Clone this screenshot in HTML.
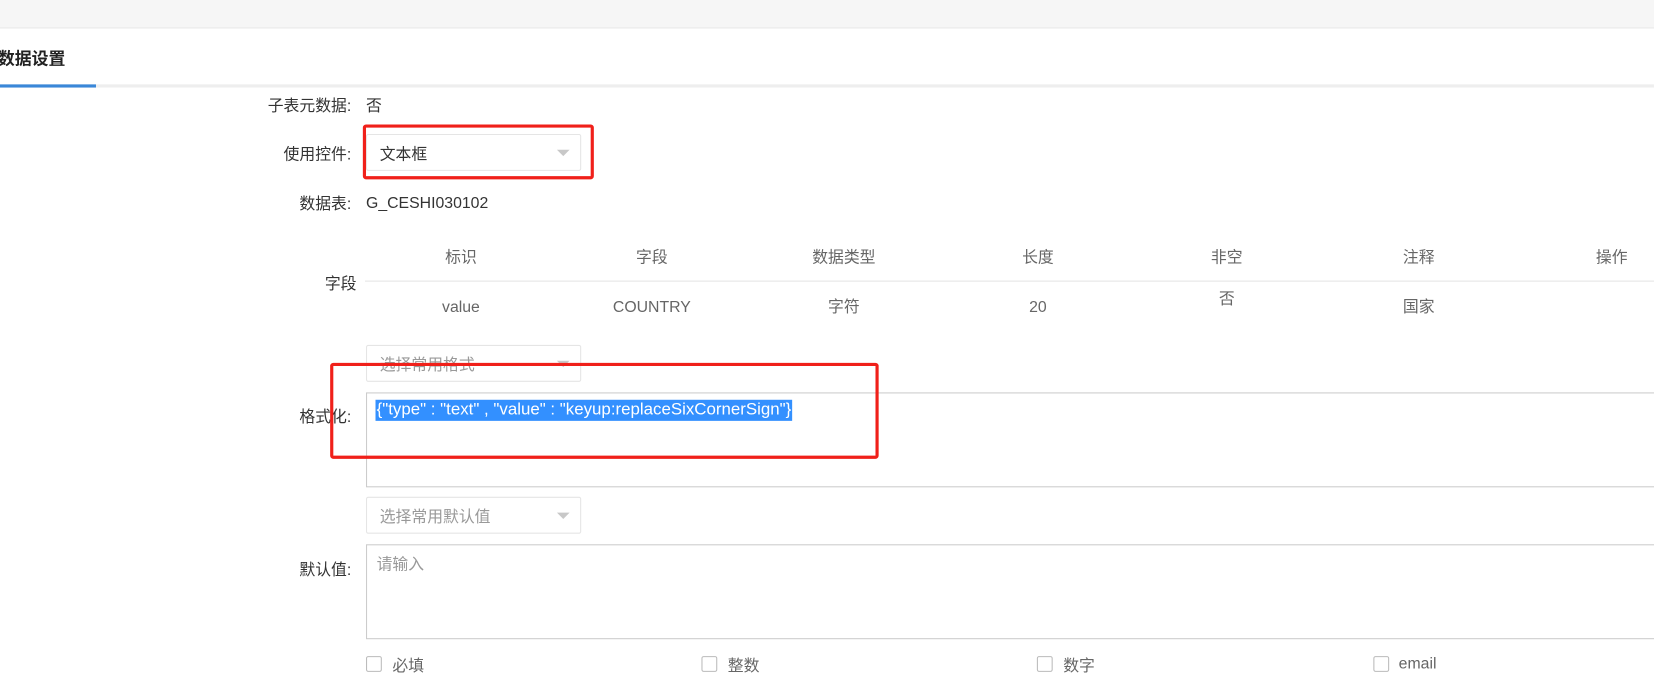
<!DOCTYPE html>
<html><head><meta charset="utf-8"><style>
body{margin:0;width:1654px;height:667px;overflow:hidden;background:#fff;font-family:"Liberation Sans","Noto Sans CJK SC",sans-serif;color:#333;position:relative}
#w{position:absolute;left:0;top:0;width:1568px;height:633px;transform:scale(1.0548);transform-origin:0 0;font-size:15px}
.a{position:absolute;white-space:nowrap}
.lbl{position:absolute;right:calc(1568px - 333px);white-space:nowrap;color:#333}
.sel{position:absolute;left:347px;width:204px;height:35px;border:1px solid #e5e5e5;box-sizing:border-box;border-radius:2px}
.sel .t{position:absolute;left:12px;top:7px;color:#999}
.sel .c{position:absolute;right:10px;top:14px;border-left:6px solid transparent;border-right:6px solid transparent;border-top:6px solid #c8c8c8}
.ta{position:absolute;left:347px;width:1400px;border:1px solid #ccc;box-sizing:border-box}
.th{position:absolute;top:233px;color:#666;transform:translateX(-50%)}
.td{position:absolute;top:281px;color:#666;transform:translateX(-50%)}
.cb{position:absolute;top:622px;width:13px;height:13px;border:1px solid #bbb;border-radius:2px}
.red{position:absolute;border:3px solid #f0201a;border-radius:3px;box-sizing:border-box}
</style></head><body><div id="w">
<div class="a" style="left:0;top:0;width:1568px;height:26px;background:#f6f6f6;border-bottom:1px solid #e8e8e8"></div>
<div class="a" style="left:-2px;top:42px;font-size:16px;font-weight:bold;color:#222">数据设置</div>
<div class="a" style="left:0;top:80px;width:1568px;height:3px;background:#eee"></div>
<div class="a" style="left:0;top:80px;width:91px;height:3px;background:#3a87d8"></div>

<div class="lbl" style="top:89px">子表元数据:</div><div class="a" style="left:347px;top:89px">否</div>
<div class="lbl" style="top:135px">使用控件:</div>
<div class="sel" style="top:127px"><span class="t" style="color:#333">文本框</span><span class="c"></span></div>
<div class="red" style="left:344px;top:118px;width:219px;height:52px"></div>
<div class="lbl" style="top:182px">数据表:</div><div class="a" style="left:347px;top:184px">G_CESHI030102</div>

<div class="lbl" style="top:258px;right:calc(1568px - 338px)">字段</div>
<div class="a" style="left:346px;top:266px;width:1300px;height:1px;background:#e5e5e5"></div>
<div class="th" style="left:437px">标识</div><div class="th" style="left:618px">字段</div><div class="th" style="left:800px">数据类型</div><div class="th" style="left:984px">长度</div><div class="th" style="left:1163px">非空</div><div class="th" style="left:1345px">注释</div><div class="th" style="left:1528px">操作</div>
<div class="td" style="left:437px;top:283px">value</div><div class="td" style="left:618px;top:283px">COUNTRY</div><div class="td" style="left:800px;top:280px">字符</div><div class="td" style="left:984px;top:283px">20</div><div class="td" style="left:1163px;top:272px">否</div><div class="td" style="left:1345px;top:280px">国家</div>

<div class="sel" style="top:327px"><span class="t">选择常用格式</span><span class="c"></span></div>
<div class="lbl" style="top:384px">格式化:</div>
<div class="ta" style="top:372px;height:90px"></div>
<div class="a" style="left:356px;top:379px;background:#3390ff;color:#fff;padding:0 1px;line-height:20px;font-size:16px">{"type" : "text" , "value" : "keyup:replaceSixCornerSign"}</div>
<div class="red" style="left:313px;top:344px;width:520px;height:91px"></div>

<div class="sel" style="top:471px"><span class="t">选择常用默认值</span><span class="c"></span></div>
<div class="lbl" style="top:529px">默认值:</div>
<div class="ta" style="top:516px;height:90px"></div>
<div class="a" style="left:357px;top:524px;color:#999">请输入</div>

<div class="cb" style="left:347px"></div><div class="a" style="left:372px;top:620px;color:#666">必填</div>
<div class="cb" style="left:665px"></div><div class="a" style="left:690px;top:620px;color:#666">整数</div>
<div class="cb" style="left:983px"></div><div class="a" style="left:1008px;top:620px;color:#666">数字</div>
<div class="cb" style="left:1302px"></div><div class="a" style="left:1326px;top:621px;color:#666">email</div>
</div></body></html>
